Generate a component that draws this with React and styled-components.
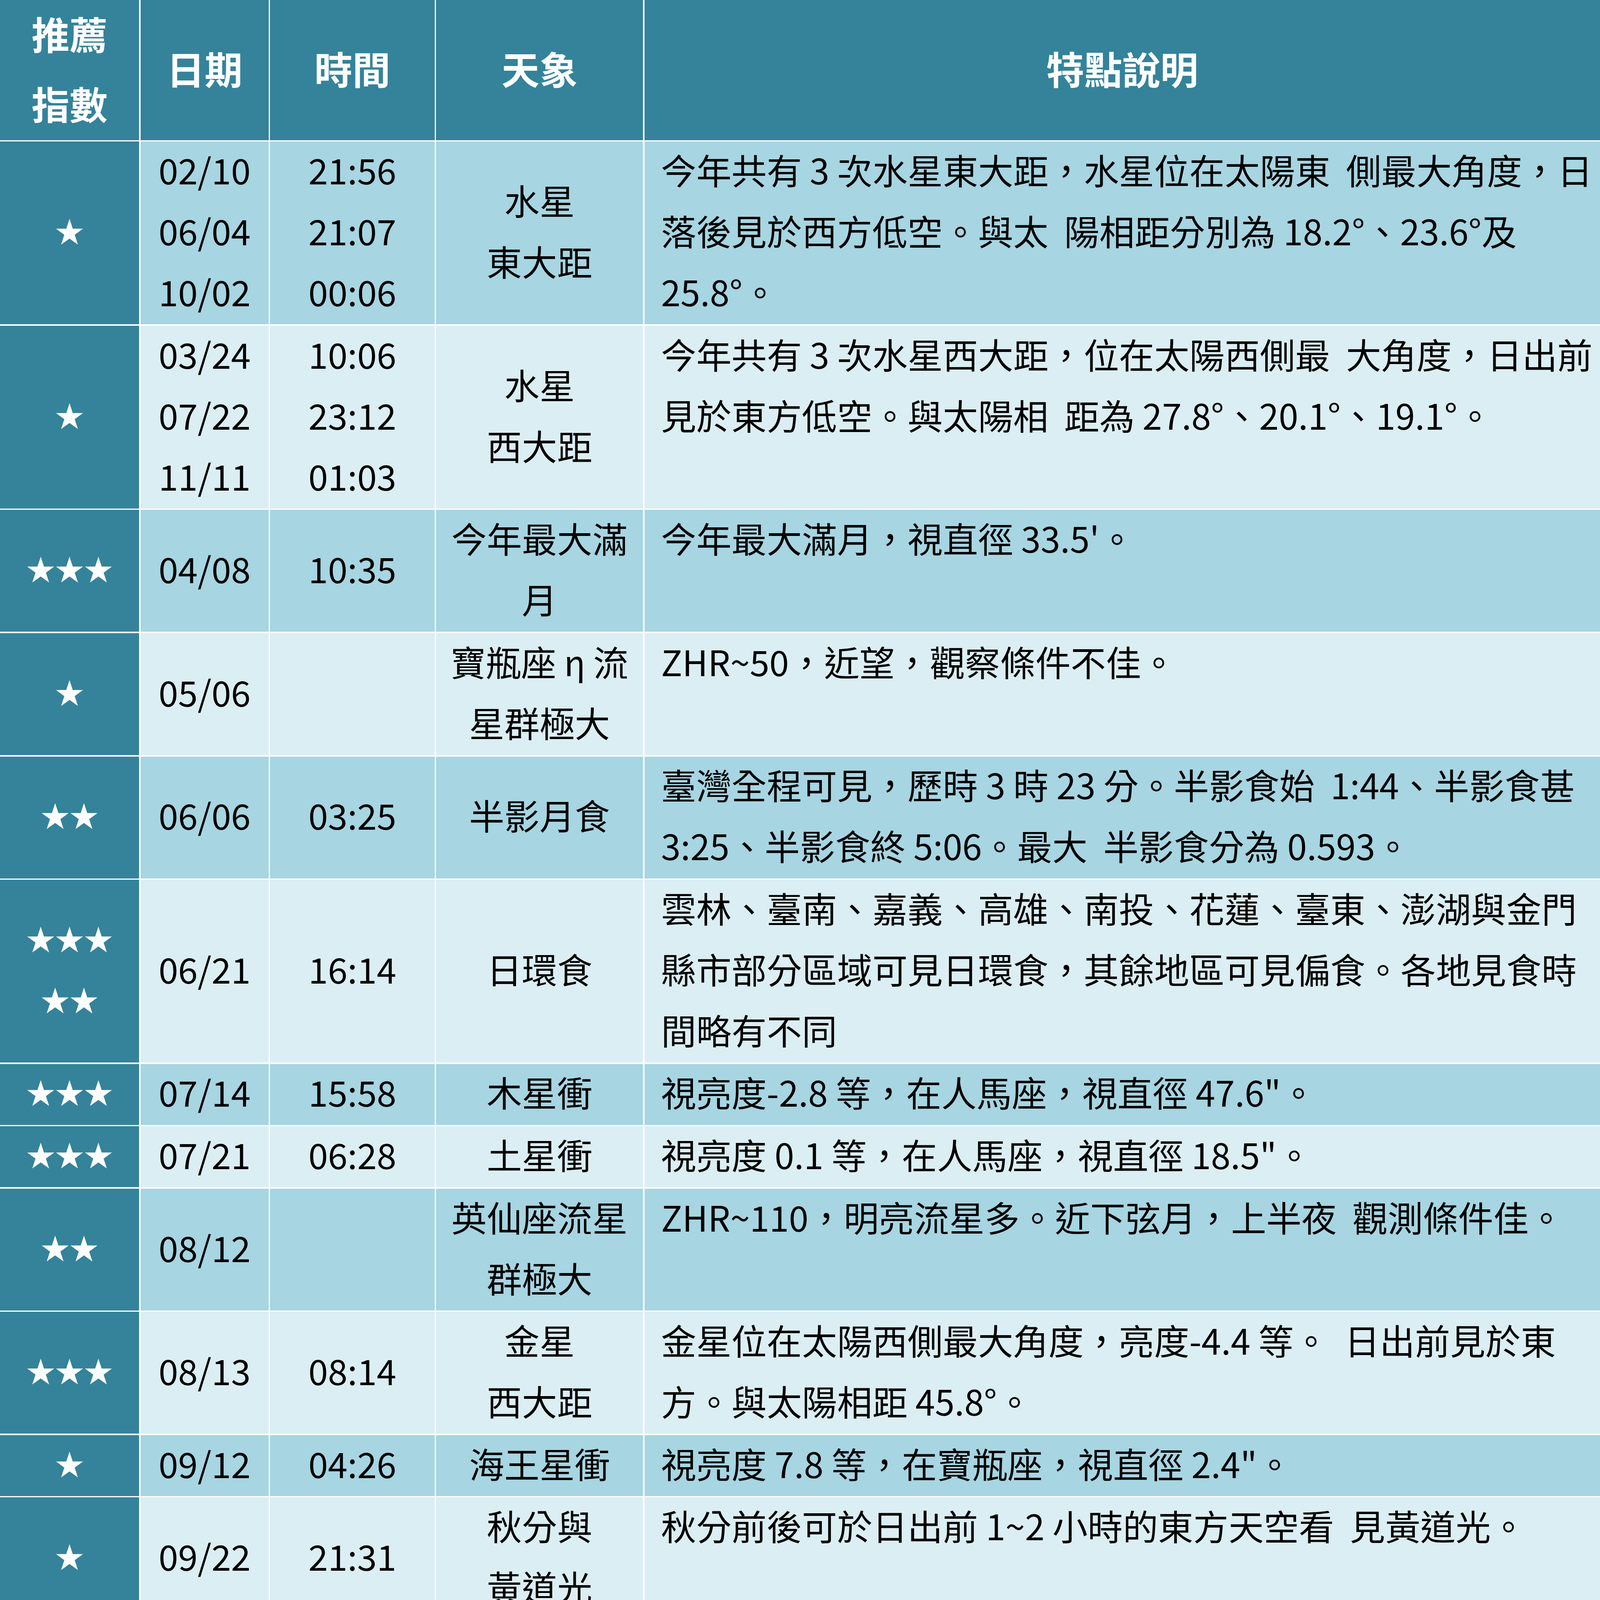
import React from 'react';
import styled, { createGlobalStyle } from 'styled-components';

// All sizes are expressed relative to the 4543px-wide design, so the table
// fills the viewport width exactly whatever the device scale factor is.
const px = n => `${((n * 100) / 4543).toFixed(5)}vw`;

const Global = createGlobalStyle`
  html, body { margin: 0; padding: 0; overflow: hidden; background: #ffffff; }
  body { font-family: "Noto Sans CJK TC", "Noto Sans", sans-serif; }
`;

const TEAL = '#34839b';
const BLUE = '#a7d5e2';
const PALE = '#dbeef3';
const LINE = 173;

const Table = styled.div`
  display: flex;
  flex-direction: column;
  gap: ${px(4)};
  width: 100vw;
  background: #ffffff;
`;

const Row = styled.div`
  display: grid;
  grid-template-columns: ${px(395)} ${px(364)} ${px(467)} ${px(588)} 1fr;
  grid-template-rows: ${p => px(p.$height)};
  gap: ${px(4)};
`;

const HeadCell = styled.div`
  background: ${TEAL};
  color: #ffffff;
  font-weight: 700;
  font-size: ${px(108)};
  line-height: ${px(199)};
  display: flex;
  flex-direction: column;
  align-items: center;
  justify-content: center;
  text-align: center;
`;

const HeadLine = styled.span`
  display: block;
  margin-top: ${px(-6)};
  margin-bottom: ${px(6)};
`;

const StarCell = styled.div`
  background: ${TEAL};
  color: #ffffff;
  font-size: ${px(82)};
  line-height: ${px(LINE)};
  display: flex;
  flex-direction: column;
  align-items: center;
  justify-content: center;
`;

const Cell = styled.div`
  background: ${p => (p.$alt ? PALE : BLUE)};
  color: #000000;
  font-size: ${px(100)};
  line-height: ${px(LINE)};
  display: flex;
  flex-direction: column;
  align-items: center;
  justify-content: center;
  text-align: center;
  white-space: pre;
`;

const DescCell = styled(Cell)`
  align-items: flex-start;
  justify-content: flex-start;
  text-align: left;
  padding-left: ${px(47)};
`;

const Line = styled.span`
  display: block;
  height: ${px(LINE)};
  margin-top: ${px(-8)};
  margin-bottom: ${px(8)};
`;

const rows = [
  { stars: ['★'], date: ['02/10', '06/04', '10/02'], time: ['21:56', '21:07', '00:06'], event: ['水星', '東大距'],
    desc: ['今年共有 3 次水星東大距，水星位在太陽東  側最大角度，日', '落後見於西方低空。與太  陽相距分別為 18.2°、23.6°及', '25.8°。'] },
  { stars: ['★'], date: ['03/24', '07/22', '11/11'], time: ['10:06', '23:12', '01:03'], event: ['水星', '西大距'],
    desc: ['今年共有 3 次水星西大距，位在太陽西側最  大角度，日出前', '見於東方低空。與太陽相  距為 27.8°、20.1°、19.1°。'] },
  { stars: ['★★★'], date: ['04/08'], time: ['10:35'], event: ['今年最大滿', '月'],
    desc: ['今年最大滿月，視直徑 33.5\'。'] },
  { stars: ['★'], date: ['05/06'], time: [], event: ['寶瓶座 η 流', '星群極大'],
    desc: ['ZHR~50，近望，觀察條件不佳。'] },
  { stars: ['★★'], date: ['06/06'], time: ['03:25'], event: ['半影月食'],
    desc: ['臺灣全程可見，歷時 3 時 23 分。半影食始  1:44、半影食甚', '3:25、半影食終 5:06。最大  半影食分為 0.593。'] },
  { stars: ['★★★', '★★'], date: ['06/21'], time: ['16:14'], event: ['日環食'],
    desc: ['雲林、臺南、嘉義、高雄、南投、花蓮、臺東、澎湖與金門', '縣市部分區域可見日環食，其餘地區可見偏食。各地見食時', '間略有不同'] },
  { stars: ['★★★'], date: ['07/14'], time: ['15:58'], event: ['木星衝'],
    desc: ['視亮度-2.8 等，在人馬座，視直徑 47.6"。'] },
  { stars: ['★★★'], date: ['07/21'], time: ['06:28'], event: ['土星衝'],
    desc: ['視亮度 0.1 等，在人馬座，視直徑 18.5"。'] },
  { stars: ['★★'], date: ['08/12'], time: [], event: ['英仙座流星', '群極大'],
    desc: ['ZHR~110，明亮流星多。近下弦月，上半夜  觀測條件佳。'] },
  { stars: ['★★★'], date: ['08/13'], time: ['08:14'], event: ['金星', '西大距'],
    desc: ['金星位在太陽西側最大角度，亮度-4.4 等。  日出前見於東', '方。與太陽相距 45.8°。'] },
  { stars: ['★'], date: ['09/12'], time: ['04:26'], event: ['海王星衝'],
    desc: ['視亮度 7.8 等，在寶瓶座，視直徑 2.4"。'] },
  { stars: ['★'], date: ['09/22'], time: ['21:31'], event: ['秋分與', '黃道光'],
    desc: ['秋分前後可於日出前 1~2 小時的東方天空看  見黃道光。'] },
  { stars: ['★★★'], date: ['10/14'], time: ['07:26'], event: ['火星衝'],
    desc: ['視亮度-2.6 等，在雙魚座，視直徑 22.3"。'] },
  { stars: ['★'], date: ['10/31'], time: ['22:49'], event: ['今年最小滿', '月'],
    desc: ['今年最小滿月，視直徑 29.4\'。'] },
  { stars: ['★'], date: ['10/31'], time: ['23:53'], event: ['天王星衝'],
    desc: ['視亮度 5.7 等，在白羊座，視直徑 3.8"。'] },
  { stars: ['★★'], date: ['11/30'], time: ['17:43'], event: ['半影月食'],
    desc: ['臺灣可見「月出帶食」，月升 17:02，半影食  甚 17:43，半影', '食終 19:56，共歷時 2:54。最大  半影食分為 0.855。'] },
  { stars: ['★★★'], date: ['12/14'], time: [], event: ['雙子座流星', '群極大'],
    desc: ['ZHR~150，近朔，觀測條件極佳。'] },
  { stars: ['★★★'], date: ['12/21'], time: ['22 時'], event: ['木星合土星'],
    desc: ['兩星相距僅 0.1°。土星亮度 0.6 等，木星-2.0  等，位在摩羯', '座，傍晚見於西方低空。'] },
];

const Lines = ({ items }) => items.map((t, i) => <Line key={i}>{t}</Line>);

export default function App() {
  return (
    <>
      <Global />
      <Table>
        <Row $height={398}>
          <HeadCell>
            <HeadLine>推薦</HeadLine>
            <HeadLine>指數</HeadLine>
          </HeadCell>
          <HeadCell><HeadLine>日期</HeadLine></HeadCell>
          <HeadCell><HeadLine>時間</HeadLine></HeadCell>
          <HeadCell><HeadLine>天象</HeadLine></HeadCell>
          <HeadCell><HeadLine>特點說明</HeadLine></HeadCell>
        </Row>
        {rows.map((r, i) => {
          const n = Math.max(r.stars.length, r.date.length, r.time.length, r.event.length, r.desc.length);
          const alt = i % 2 === 1;
          return (
            <Row key={i} $height={n * LINE}>
              <StarCell><Lines items={r.stars} /></StarCell>
              <Cell $alt={alt}><Lines items={r.date} /></Cell>
              <Cell $alt={alt}><Lines items={r.time} /></Cell>
              <Cell $alt={alt}><Lines items={r.event} /></Cell>
              <DescCell $alt={alt}><Lines items={r.desc} /></DescCell>
            </Row>
          );
        })}
      </Table>
    </>
  );
}
